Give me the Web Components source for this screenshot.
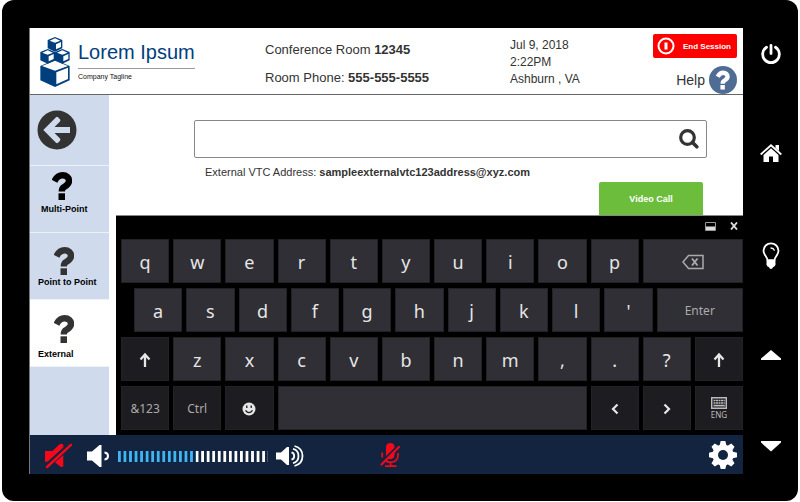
<!DOCTYPE html>
<html lang="en">
<head>
<meta charset="utf-8">
<meta name="viewport" content="width=device-width, initial-scale=1">
<title>Conference Room Controller</title>
<style>
  body { margin: 0; background: #fff; color: #333; font-family: "Liberation Sans", Arial, sans-serif; }
</style>
</head>
<body>
<room-panel></room-panel>

<script>
const define = (name, css, html) => {
  const template = document.createElement('template');
  template.innerHTML = `<style>
    *, *::before { box-sizing: border-box; }
    button { font: inherit; color: inherit; background: none; border: 0; margin: 0; padding: 0; cursor: pointer; }
    ${css}</style>${html}`;
  customElements.define(name, class extends HTMLElement {
    constructor() {
      super();
      this.attachShadow({ mode: 'open' }).append(template.content.cloneNode(true));
    }
  });
};

const cube = (x, y) => `<g transform="translate(${x} ${y})">
  <path fill="#003f7d" d="M22 0 44 9V34L22 44 0 34V9Z"/>
  <path fill="#fff" d="M6 11 22 4 38 11 22 17ZM25 22 40 15V30L25 37Z"/></g>`;
const question = (color) => `<path fill="none" stroke="${color}" stroke-width="6.400" d="M2.500 9.200C4.500 5.200 7 3.300 10.500 3.300C14.600 3.300 17 5.800 17 9C17 12.200 14.800 13.400 12.400 14.800C10.200 16 9.800 17 9.800 19.600"/><path fill="${color}" d="M6.500 21.300H13V28H6.500Z"/>`;

// name: [width, height, viewBox, markup]
const icons = {
  logo: [30, 50, '0 0 88 150', `
    <path fill="#003f7d" d="M44 68 88 87V130L44 150 0 130V87Z"/>
    <path fill="#fff" d="M5 87 44 71 83 87 44 101ZM48 106 83 92V126L48 142Z"/>
    ${cube(22, 0)}${cube(0, 36)}${cube(44, 36)}`],
  back: [40, 40, '0 0 40 40', `<circle cx="20" cy="20" r="19.500" fill="#333"/>
    <path fill="none" stroke="#cfdbed" stroke-width="6" d="M10 20H33"/>
    <path fill="#cfdbed" d="M6.300 20 19 7.200Q20 6.300 21 7.200L23 9.200Q23.800 10.300 23 11.500L14.500 20 23 28.500Q23.800 29.700 23 30.800L21 32.800Q20 33.700 19 32.800Z"/>`],
  question: [20, 28, '0 0 20 28', question('currentColor')],
  help: [28, 28, '0 0 28 28', `<circle cx="14" cy="14" r="14" fill="#4f6d94"/><g transform="translate(7 4.500) scale(.68)">${question('#fff')}</g>`],
  end: [18, 18, '0 0 18 18', '<circle cx="9" cy="9" r="7.500" fill="none" stroke="#fff" stroke-width="2"/><path fill="#fff" d="M7.500 5.500H10.500V12.500H7.500Z"/>'],
  search: [20, 20, '0 0 20 20', '<circle cx="8.500" cy="8.500" r="6.800" fill="none" stroke="#333" stroke-width="3.200"/><path stroke="#333" stroke-width="3.600" stroke-linecap="round" d="M13.500 13.500 17.800 17.800"/>'],
  power: [20, 20, '0 0 20 20', '<path fill="none" stroke="#fff" stroke-width="2.800" stroke-linecap="round" d="M5.500 3.300A8.300 8.300 0 1 0 14.500 3.300M10 1.400V9.500"/>'],
  home: [22, 20, '0 0 22 20', '<path fill="none" stroke="#fff" stroke-width="1.900" d="M.7 11.500 11 2.300 21.300 11.500"/><path fill="#fff" d="M15.500 2H19V8L15.500 5ZM11 5.300 18.500 12V19H13V13.500H9V19H3.500V12Z"/>'],
  bulb: [18, 28, '0 0 18 28', '<path fill="#000" stroke="#fff" stroke-width="1.800" d="M5.500 18.500C5.300 14.500 1.500 13 1.500 8.800A7.500 7.500 0 0 1 16.500 8.800C16.500 13 12.700 14.500 12.500 18.500Z"/><path fill="none" stroke="#fff" stroke-width="1.300" stroke-linecap="round" d="M9 6Q11.500 6 12.300 8.200"/><path fill="#fff" d="M4.800 17.500H13.200L13.600 22.500Q13 24.800 11 25.200 10.500 27 9 27 7.500 27 7 25.200 5 24.800 4.400 22.500Z"/>'],
  up: [20, 12, '0 0 20 12', '<path fill="#fff" d="M10 1 20 9.500V11H0V9.500Z"/>'],
  down: [20, 12, '0 0 20 12', '<path fill="#fff" d="M0 1H20V2.500L10 11.500 0 2.500Z"/>'],
  mute: [28, 26, '0 0 28 26', '<path fill="#f5081a" d="M1 8H8.500L15.500 1.300Q17.500.2 19.300 1.500V4.600L3.600 18.800H1ZM19.300 12V23.500Q17 24.500 15.500 23L11 19.300Z"/><path stroke="#f5081a" stroke-width="2.400" stroke-linecap="round" d="M3 24 27 1.800"/>'],
  quiet: [24, 24, '0 0 24 24', '<path fill="#fff" d="M1 7.500H6L13.500 1H15.500V23H13.500L6 16.500H1Z"/><path fill="none" stroke="#fff" stroke-width="2" d="M18.500 8.500Q22 8.800 22 12T18.500 15.500"/>'],
  loud: [28, 22, '0 0 28 22', '<path fill="#fff" d="M0 7.500H5L11 2H13V20H11L5 14.500H0Z"/><path fill="none" stroke="#fff" stroke-width="1.800" d="M15.500 7.300Q18.200 8 18.200 11T15.500 14.700M17 3.800Q22.500 5 22.500 11T17 18.200M18.500 1Q26.500 3 26.500 11T18.500 21"/>'],
  mic: [20, 26, '0 0 20 26', '<g fill="none" stroke="#f5081a" stroke-width="1.700"><path d="M2.200 10.500V15.500M18 11V13Q18 20 10.500 20.300 7.500 20.300 5.500 18.500M10.500 20V24M5 24.200H16.500"/></g><path fill="#f5081a" d="M6 5.500Q6 1 10.300 1T14.500 5V6L6 14ZM14.500 10.500V12.500Q14.500 17 10.500 17.200 9 17.200 8 16.500Z"/><path stroke="#f5081a" stroke-width="2.200" stroke-linecap="round" d="M1.500 22.500 19 5"/>'],
  gear: [28, 28, '-14 -14 28 28', `<g fill="#fff">${[0, 45, 90, 135].map(a => `<path transform="rotate(${a})" d="M-2.300-14H2.300L3.800-8V8L2.300 14H-2.300L-3.800 8V-8Z"/>`).join('')}<circle r="10.500"/></g><circle r="5" fill="#12243f"/>`],
  backspace: [22, 16, '0 0 22 16', '<path fill="none" stroke="currentColor" stroke-width="1.500" d="M1 8 6.500 1.500H21V14.500H6.500Z"/><path stroke="currentColor" stroke-width="1.900" d="M10 4.500 15.500 11.500M15.500 4.500 10 11.500"/>'],
  shift: [12, 16, '0 0 12 16', '<path fill="none" stroke="currentColor" stroke-width="2.300" d="M6 15V2.500M1.500 7.500 6 2.500 10.500 7.500"/>'],
  smile: [14, 14, '0 0 14 14', '<circle cx="7" cy="7" r="6.500" fill="currentColor"/><path fill="none" stroke="#1d1c21" stroke-width="1.300" d="M3.500 8.300Q7 13 10.500 8.300M4.800 3.500V6M9.200 3.500V6"/>'],
  left: [8, 12, '0 0 8 12', '<path fill="none" stroke="currentColor" stroke-width="2.200" d="M6.500 1.500 2 6 6.500 10.500"/>'],
  right: [8, 12, '0 0 8 12', '<path fill="none" stroke="currentColor" stroke-width="2.200" d="M1.500 1.500 6 6 1.500 10.500"/>'],
  keys: [16, 12, '0 0 16 12', '<path fill="none" stroke="currentColor" stroke-width="1.500" d="M.7.7H15.300V11.300H.7Z"/><path stroke="currentColor" stroke-width="1.700" stroke-dasharray="2 .5" d="M2.500 3.500H13.800M2.500 6H13.800"/><path stroke="currentColor" stroke-width="1.700" d="M2.500 8.600H13.800"/>'],
  dock: [11, 9, '0 0 11 9', '<path fill="none" stroke="#999" d="M.5.5H10.500V8.500H.5Z"/><path fill="#ddd" d="M1 4.500H10V8H1Z"/>'],
  close: [8, 8, '0 0 8 8', '<path stroke="#ddd" stroke-width="1.900" d="M1 .5 7 7.500M7 .5 1 7.500"/>']
};

customElements.define('ui-icon', class extends HTMLElement {
  connectedCallback() {
    if (this.shadowRoot) return;
    const [w, h, box, art] = icons[this.getAttribute('name')];
    this.attachShadow({ mode: 'open' }).innerHTML =
      `<style>:host{display:block;flex:none;width:${w}px;height:${h}px} svg{display:block}</style>
       <svg width="${w}" height="${h}" viewBox="${box}" aria-hidden="true">${art}</svg>`;
  }
});

define('brand-logo', `
  :host { display: flex; align-items: center; gap: 8px; padding-top: 2px; }
  .name { font-size: 20px; line-height: 26px; color: #003f7d; padding-bottom: 3px; border-bottom: 1px solid #999; white-space: nowrap; }
  .tag { font-size: 7px; line-height: 16px; color: #111; }
`, `<ui-icon name="logo"></ui-icon><div><div class="name"><slot></slot></div><div class="tag"><slot name="tagline"></slot></div></div>`);

define('room-header', `
  :host { display: grid; grid-template-columns: 225fr 245fr 227fr; align-items: center; height: 67px; padding: 0 6px 0 10px; background: #fff; border-bottom: 1px solid #666; }
  .room { font-size: 13px; line-height: 28px; padding-top: 6px; }
  .last { display: flex; justify-content: space-between; height: 66px; }
  .when { font-size: 12px; line-height: 17px; padding-top: 9px; white-space: nowrap; }
  .actions { display: flex; flex-direction: column; align-items: flex-end; justify-content: space-between; padding-top: 6px; }
  .end { display: flex; align-items: center; gap: 8px; height: 24px; padding: 0 6px 0 4px; border-radius: 2px; background: #f00; color: #fff; font-size: 8px; font-weight: bold; }
  .help { display: flex; align-items: center; gap: 4px; font-size: 14px; }
`, `
  <brand-logo>Lorem Ipsum<span slot="tagline">Company Tagline</span></brand-logo>
  <div class="room"><div>Conference Room <b>12345</b></div><div>Room Phone: <b>555-555-5555</b></div></div>
  <div class="last">
    <div class="when"><div>Jul 9, 2018</div><div>2:22PM</div><div>Ashburn , VA</div></div>
    <div class="actions">
      <button class="end"><ui-icon name="end"></ui-icon>End Session</button>
      <button class="help">Help<ui-icon name="help"></ui-icon></button>
    </div>
  </div>`);

define('nav-item', `
  :host { display: block; height: 67px; color: #333; border-bottom: 1px solid #edf2f9; box-sizing: border-box; }
  :host([active]) { background: #fff; }
  button { display: flex; flex-direction: column; align-items: flex-start; justify-content: flex-end; width: 100%; height: 100%; padding: 0 0 10px 8px; }
  ui-icon { margin-left: 16px; }
  span { font-size: 9px; line-height: 14px; font-weight: bold; color: #000; white-space: nowrap; }
  :host([strong]) { color: #000; }
  :host([strong]) button { padding: 0 0 16px 11px; }
  :host([strong]) ui-icon { margin: 0 0 2px 11px; }
  :host([active]) button { padding-bottom: 5px; }
  :host([active]) ui-icon { margin-bottom: 4px; }
`, `<button><ui-icon name="question"></ui-icon><span><slot></slot></span></button>`);

define('side-nav', `
  :host { display: block; flex: none; width: 79px; background: #cfdbed; }
  .back { display: block; width: 100%; height: 71px; padding-left: 7px; border-bottom: 1px solid #edf2f9; }
`, `<button class="back" aria-label="Back"><ui-icon name="back"></ui-icon></button>
  <nav><nav-item strong>Multi-Point</nav-item><nav-item>Point to Point</nav-item><nav-item active>External</nav-item></nav>`);

define('call-form', `
  :host { display: block; margin: 25px 36px 0 78px; }
  .box { display: flex; align-items: center; height: 38px; border: 1px solid #888; border-radius: 2px; padding-right: 7px; }
  input { flex: 1; min-width: 0; height: 100%; border: 0; outline: 0; background: none; padding: 0 10px; font: inherit; font-size: 14px; color: inherit; }
  .address { margin-top: 6px; padding-left: 11px; font-size: 11px; line-height: 16px; }
  .call { display: block; width: 104px; height: 33px; margin: 2px 4px 0 auto; border-radius: 2px 2px 0 0; background: #6cbd3c; color: #fff; font-size: 9px; font-weight: bold; }
`, `
  <div class="box"><input id="q" type="text" aria-label="External VTC Address"><button aria-label="Search"><ui-icon name="search"></ui-icon></button></div>
  <div class="address"><label for="q">External VTC Address: </label><b>sampleexternalvtc123address@xyz.com</b></div>
  <button class="call">Video Call</button>`);

define('key-cap', `
  :host { display: block; height: 44px; color: #e6e6e6; font-size: 18px; }
  :host([wide]) { grid-column: span 2; }
  :host([space]) { grid-column: span 6; }
  :host([dark]) { --face: #1d1c21; }
  :host([small]) { font-size: 12px; color: #aaa; }
  :host([tiny]) { font-size: 8px; line-height: 10px; color: #bbb; }
  button { display: flex; flex-direction: column; gap: 1px; align-items: center; justify-content: center; width: 100%; height: 100%; padding-top: 1px; background: var(--face, #302f35); border: 1px solid #222126; }
`, `<button><slot></slot></button>`);

const letters = (s) => [...s].map(c => `<key-cap>${c}</key-cap>`).join('');
define('touch-keyboard', `
  :host { display: block; background: #000; border-top: 1px solid #888; padding: 0 0 5px 5px; font-family: "Noto Sans", "Open Sans", sans-serif; }
  .bar { display: flex; justify-content: flex-end; align-items: center; gap: 14px; height: 20px; padding-right: 5px; margin-bottom: 3px; }
  .rows { display: grid; gap: 5px; }
  .row { display: grid; grid-template-columns: repeat(12, minmax(0, 1fr)); gap: 4px; }
  .inset { grid-template-columns: repeat(10, minmax(0, 48fr)) minmax(0, 86fr); margin-left: 13px; }
`, `
  <div class="bar"><button aria-label="Dock keyboard"><ui-icon name="dock"></ui-icon></button><button aria-label="Close keyboard"><ui-icon name="close"></ui-icon></button></div>
  <div class="rows">
    <div class="row">${letters('qwertyuiop')}<key-cap wide small><ui-icon name="backspace"></ui-icon></key-cap></div>
    <div class="row inset">${letters("asdfghjkl'")}<key-cap small>Enter</key-cap></div>
    <div class="row"><key-cap dark><ui-icon name="shift"></ui-icon></key-cap>${letters('zxcvbnm,.?')}<key-cap dark><ui-icon name="shift"></ui-icon></key-cap></div>
    <div class="row"><key-cap dark small>&amp;123</key-cap><key-cap dark small>Ctrl</key-cap><key-cap dark><ui-icon name="smile"></ui-icon></key-cap><key-cap space></key-cap><key-cap dark><ui-icon name="left"></ui-icon></key-cap><key-cap dark><ui-icon name="right"></ui-icon></key-cap><key-cap dark tiny><ui-icon name="keys"></ui-icon>ENG</key-cap></div>
  </div>`);

define('media-bar', `
  :host { display: flex; align-items: center; height: 39px; padding: 0 6px 0 14px; background: #12243f; }
  .vol { display: flex; align-items: center; gap: 8px; padding-top: 3px; }
  .mute { margin: 3px 14px 0 0; }
  input { appearance: none; width: 150px; height: 11px; margin: 0; background: linear-gradient(90deg, #3fb5f5 52%, #fff 52%); mask: linear-gradient(90deg, #000 3px, transparent 3px) 0 0 / calc(100% / 27) 100%; }
  input::-webkit-slider-thumb { appearance: none; width: 4px; height: 11px; background: transparent; }
  .mic { margin-left: 76px; }
  .gear { margin-left: auto; }
`, `
  <button class="mute" aria-label="Mute"><ui-icon name="mute"></ui-icon></button>
  <div class="vol"><button aria-label="Volume down"><ui-icon name="quiet"></ui-icon></button><input type="range" aria-label="Volume" min="0" max="27" value="14"><button aria-label="Volume up"><ui-icon name="loud"></ui-icon></button></div>
  <button class="mic" aria-label="Microphone muted"><ui-icon name="mic"></ui-icon></button>
  <button class="gear" aria-label="Settings"><ui-icon name="gear"></ui-icon></button>`);

define('device-rail', `
  :host { display: flex; flex: none; flex-direction: column; align-items: center; gap: 79px; width: 55px; padding-top: 44px; }
`, ['power', 'home', 'bulb', 'up', 'down'].map(n => `<button aria-label="${n}"><ui-icon name="${n}"></ui-icon></button>`).join(''));

define('room-panel', `
  :host { display: flex; min-height: calc(100vh - 1px); margin: 0 2px 1px; background: #000; border-radius: 12px; }
  .screen { flex: 1; min-width: 0; display: flex; flex-direction: column; margin: 28px 0 27px 27px; border-left: 1px solid #777; background: #fff; }
  room-header { box-sizing: border-box; }
  .body { flex: 1; display: flex; }
  main { flex: 1; min-width: 0; display: flex; flex-direction: column; padding-left: 7px; }
  touch-keyboard { margin-top: auto; }
`, `
  <div class="screen">
    <room-header></room-header>
    <div class="body"><side-nav></side-nav><main><call-form></call-form><touch-keyboard></touch-keyboard></main></div>
    <media-bar></media-bar>
  </div>
  <device-rail></device-rail>`);
</script>
</body>
</html>
